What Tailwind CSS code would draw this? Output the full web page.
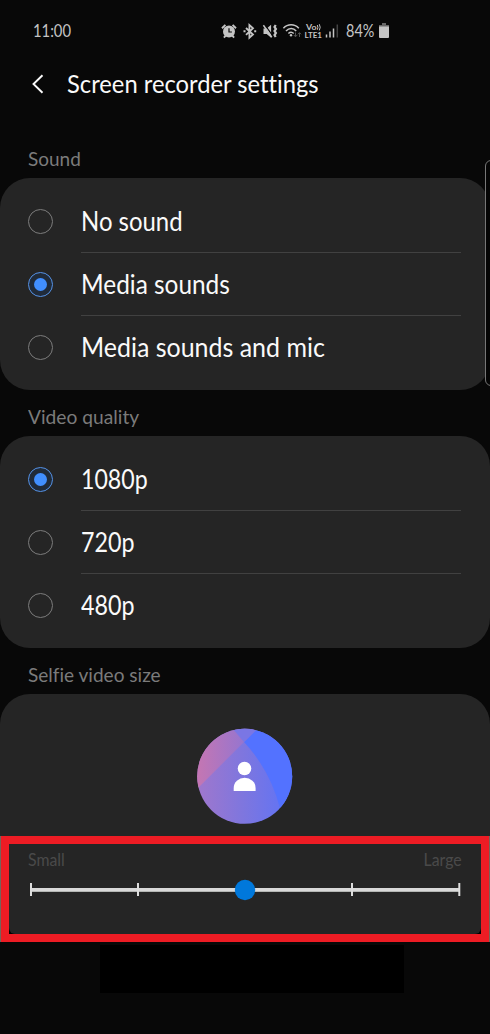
<!DOCTYPE html>
<html lang="en">
<head>
<meta charset="utf-8">
<meta name="viewport" content="width=device-width, initial-scale=1">
<title>Screen recorder settings</title>
<script src="https://cdn.jsdelivr.net/npm/@tailwindcss/browser@4"></script>
</head>
<body class="bg-[#080808]">
<div class="relative flex h-[1034px] w-[490px] flex-col overflow-hidden bg-[#080808] font-['Lato','Liberation_Sans',sans-serif] text-[#fafafa] [font-variant-ligatures:none]">

  <!-- Status bar -->
  <header class="flex h-[61px] shrink-0 items-center pl-[33px] text-[17px] leading-none text-[#c4c4c4]">
    <div class="w-[188px]"><span class="inline-block origin-left scale-x-[0.87] whitespace-nowrap">11:00</span></div>
    <svg class="h-[20px] w-[121px] shrink-0" viewBox="221 21 121 20" fill="none" stroke="#c4c4c4">
      <!-- alarm -->
      <circle cx="229" cy="31.500" r="6" fill="#c4c4c4" stroke="none"/>
      <path d="M229 28.300v3.700h2.900" stroke="#080808" stroke-width="1.200"/>
      <path d="M222 28.200l3.400-3.300M236 28.200l-3.400-3.300M225.700 35.700l-1.800 2M232.300 35.700l1.800 2" stroke-width="1.900"/>
      <!-- bluetooth -->
      <path d="M246 28l7 6.500-3.600 3.200V25l3.600 3.200-7 6.600" stroke-width="1.800"/>
      <path d="M243.500 31.300h2M254.200 31.300h2" stroke-width="2"/>
      <!-- muted, vibrating -->
      <path d="M263.500 28.500h3.200l4.400-3.800v13l-4.400-3.800h-3.200z" fill="#c4c4c4" stroke="none"/>
      <path d="M264.800 24.600l8 11.500" stroke="#080808" stroke-width="1.200"/>
      <path d="M263.400 25.300l8.400 12" stroke-width="1.500"/>
      <path d="M275.700 25l-1.200 2 1.400 2-1.400 2 1.400 2-1.400 2 1.200 2" stroke-width="2.200"/>
      <!-- wifi -->
      <path d="M283.400 28.300c4.300-4.700 11.100-4.700 15.400 0M286 31c3-3.200 7.400-3.200 10.200 0M288.400 33.500c1.700-1.700 3.700-1.700 5.300 0" stroke-width="1.500"/>
      <circle cx="291" cy="35.300" r="1.200" fill="#c4c4c4" stroke="none"/>
      <path d="M295.500 32.500v4M293.800 35l1.700 1.800 1.700-1.800M299.500 37v-4M297.900 34.300l1.600-1.700 1.600 1.700" stroke="#555" stroke-width="1"/>
      <!-- carrier -->
      <g fill="#c4c4c4" stroke="none" font-family="Lato, sans-serif" font-weight="700">
        <text x="306" y="29.800" font-size="7.500" textLength="10.500" lengthAdjust="spacingAndGlyphs">Vo</text>
        <text x="304.500" y="38.300" font-size="7.500" textLength="17.500" lengthAdjust="spacingAndGlyphs">LTE1</text>
      </g>
      <path d="M317.300 25q1.200 2.400 0 4.800M319.300 24.200q1.800 3.200 0 6.200" stroke-width="1"/>
      <!-- signal -->
      <path d="M326.500 34.500v3M330 31.500v6M333.500 28.500v9" stroke-width="1.500"/>
      <path d="M337.300 24.500v13" stroke="#444" stroke-width="1.500"/>
    </svg>
    <div class="ml-[4px] w-[33px]"><span class="inline-block origin-left scale-x-[0.85] whitespace-nowrap">84%</span></div>
    <svg class="h-[16px] w-[10px]" viewBox="0 0 10 16"><path d="M3 0h4v2h3v2H0V2h3z" fill="#666"/><path d="M0 3.500h10v10.500q0 1-1 1H1q-1 0-1-1z" fill="#c4c4c4"/></svg>
  </header>

  <!-- Title -->
  <div class="flex h-[45px] shrink-0 items-center pl-[32px]">
    <svg class="h-[20px] w-[12px]" viewBox="0 0 12 20" fill="none" stroke="#fafafa" stroke-width="1.900"><path d="M10.500 1.200L1.500 10l9 8.800"/></svg>
    <h1 class="ml-[22.500px] origin-left scale-x-[0.95] whitespace-nowrap text-[25px] leading-none">Screen recorder settings</h1>
  </div>

  <!-- Sound -->
  <h2 class="flex h-[72px] shrink-0 items-end pb-[9px] pl-[28px] text-[20px] leading-[22px] text-[#7b7b7b]"><span class="origin-left scale-x-[0.95]">Sound</span></h2>
  <section class="h-[212px] shrink-0 rounded-[30px] bg-[#252525] pt-[12px] pr-[29px] pl-[28px] text-[26px] leading-none">
    <div class="flex h-[63px] items-center">
      <i class="mb-px size-[25px] rounded-full border border-[#7c7c7c]"></i>
      <div class="ml-[28px] flex h-full flex-1 items-center border-b border-[#414141]"><span class="origin-left scale-x-[0.92] whitespace-nowrap">No sound</span></div>
    </div>
    <div class="flex h-[63px] items-center">
      <i class="mb-px flex size-[25px] items-center justify-center rounded-full border-[1.500px] border-[#5592e6] bg-[#202b3a]"><b class="size-[13px] rounded-full bg-[#418fff]"></b></i>
      <div class="ml-[28px] flex h-full flex-1 items-center border-b border-[#414141]"><span class="origin-left scale-x-[0.938] whitespace-nowrap">Media sounds</span></div>
    </div>
    <div class="flex h-[63px] items-center">
      <i class="mb-px size-[25px] rounded-full border border-[#7c7c7c]"></i>
      <div class="ml-[28px] flex h-full flex-1 items-center border-b border-transparent"><span class="origin-left scale-x-[0.96] whitespace-nowrap">Media sounds and mic</span></div>
    </div>
  </section>

  <!-- Video quality -->
  <h2 class="flex h-[46px] shrink-0 items-end pb-[9px] pl-[28px] text-[20px] leading-[22px] text-[#7b7b7b]"><span class="origin-left scale-x-[0.96]">Video quality</span></h2>
  <section class="h-[212px] shrink-0 rounded-[30px] bg-[#252525] pt-[12px] pr-[29px] pl-[28px] text-[26px] leading-none">
    <div class="flex h-[63px] items-center">
      <i class="mb-px flex size-[25px] items-center justify-center rounded-full border-[1.500px] border-[#5592e6] bg-[#202b3a]"><b class="size-[13px] rounded-full bg-[#418fff]"></b></i>
      <div class="ml-[28px] flex h-full flex-1 items-center border-b border-[#414141]"><span class="origin-left scale-x-[0.89] whitespace-nowrap">1080p</span></div>
    </div>
    <div class="flex h-[63px] items-center">
      <i class="mb-px size-[25px] rounded-full border border-[#7c7c7c]"></i>
      <div class="ml-[28px] flex h-full flex-1 items-center border-b border-[#414141]"><span class="origin-left scale-x-[0.895] whitespace-nowrap">720p</span></div>
    </div>
    <div class="flex h-[63px] items-center">
      <i class="mb-px size-[25px] rounded-full border border-[#7c7c7c]"></i>
      <div class="ml-[28px] flex h-full flex-1 items-center border-b border-transparent"><span class="origin-left scale-x-[0.895] whitespace-nowrap">480p</span></div>
    </div>
  </section>

  <!-- Selfie video size -->
  <h2 class="flex h-[46px] shrink-0 items-end pb-[9px] pl-[28px] text-[20px] leading-[22px] text-[#7b7b7b]"><span class="origin-left scale-x-[0.952]">Selfie video size</span></h2>
  <section class="flex h-[142px] shrink-0 justify-center rounded-t-[30px] bg-[#252525] pt-[34px]">
    <svg class="h-[96px] w-[96px]" viewBox="0 0 96 96">
      <defs>
        <linearGradient id="base" x1="0" x2="1"><stop offset="0" stop-color="#a077cc"/><stop offset=".5" stop-color="#7d76df"/><stop offset="1" stop-color="#5c73f8"/></linearGradient>
        <linearGradient id="pink" x1="0" x2="1"><stop offset="0" stop-color="#c576b2"/><stop offset="1" stop-color="#8875d8"/></linearGradient>
        <clipPath id="disc"><circle cx="47.700" cy="48.300" r="47.500"/></clipPath>
      </defs>
      <g clip-path="url(#disc)">
        <path d="M0 0h96v96H0z" fill="url(#base)"/>
        <path d="M0 61L61 0H0z" fill="url(#pink)"/>
        <path d="M61 0L47 14Q73 42 83 80L96 72V0z" fill="#5372ff"/>
        <path d="M35 0L47 14 61 0z" fill="#7a76e4"/>
      </g>
      <circle cx="47.500" cy="40.500" r="6.800" fill="#fff"/>
      <path d="M36.700 63v-3a10.900 10.200 0 0 1 21.900 0v3z" fill="#fff"/>
    </svg>
  </section>

  <!-- Highlighted size slider -->
  <div class="flex h-[106px] shrink-0 border-x border-[#75645a]">
    <div class="flex flex-1 flex-col border-8 border-[#ed1c24] bg-black">
      <div class="flex-1 rounded-b-[6px] bg-[#252525] px-[19px] pt-[6px]">
        <div class="flex h-[20px] items-center justify-between text-[16.500px] leading-none text-[#4a4a4a]">
          <span class="origin-left scale-x-[0.96]">Small</span><span class="origin-right scale-x-[0.96]">Large</span>
        </div>
        <svg class="mt-[9px] ml-[1px] h-[22px] w-[432px]" viewBox="29 879 432 22">
          <path d="M31 890h429" stroke="#d9d9d9" stroke-width="4"/>
          <path d="M31 891.500h429" stroke="#b4b6b4" stroke-width="1"/>
          <path d="M31 883v13M138 883v13M352 883v13M459.300 883v13" stroke="#dedede" stroke-width="2"/>
          <circle cx="245" cy="890" r="10.200" fill="#0078db"/>
        </svg>
      </div>
    </div>
  </div>

  <!-- Navigation area -->
  <div class="mt-[3px] ml-[100px] h-[48px] w-[304px] shrink-0 bg-black"></div>

  <!-- Edge panel handle -->
  <div class="absolute top-[160px] left-[485px] h-[226px] w-[12px] rounded-[6px] border border-[#777] bg-[#050505]"></div>
</div>
</body>
</html>
